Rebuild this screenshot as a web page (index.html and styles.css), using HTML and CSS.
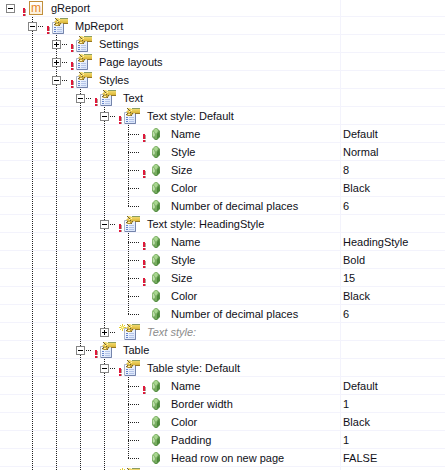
FILE: index.html
```html
<!DOCTYPE html>
<html lang="en">
<head>
    <meta charset="UTF-8">
    <meta name="viewport" content="width=device-width, initial-scale=1.0">
    <title>gReport</title>
    <link rel="stylesheet" href="styles.css">
</head>
<body>
    <svg class="sprite" aria-hidden="true">
        <defs>
            <linearGradient id="gold" x1="0" y1="0" x2="0" y2="1">
                <stop offset="0" stop-color="#f5e27c"/>
                <stop offset="0.5" stop-color="#e2c044"/>
                <stop offset="1" stop-color="#a8862a"/>
            </linearGradient>
            <linearGradient id="green" x1="0" y1="0" x2="1" y2="1">
                <stop offset="0" stop-color="#a5cf8c"/>
                <stop offset="1" stop-color="#3f7a30"/>
            </linearGradient>
            <linearGradient id="paper" x1="0" y1="0" x2="1" y2="1">
                <stop offset="0" stop-color="#ffffff"/>
                <stop offset="1" stop-color="#d5e2fa"/>
            </linearGradient>
        </defs>
        <symbol id="props" viewBox="0 0 16 16">
            <path d="M0.5 4.5h11v11h-11z" fill="url(#paper)" stroke="#a9b3cb"/>
            <path d="M11.500 5v10.500H1" fill="none" stroke="#7484ab"/>
            <path d="M2 9.500h2M2 11.500h2M2 13.500h2" stroke="#6484cc"/>
            <path d="M5 9.500h5M5 11.500h5M5 13.500h5" stroke="#b4c4e8"/>
            <path d="M8 0h8v2H8z" fill="#8a9c62"/>
            <path d="M3 0h3l2 1h8v4l-4 1-2-1-3 3H4L2 7l2-2-2-1 2-2z" fill="url(#gold)"/>
            <path d="M3 0h1v1H3zM4 1h1v1H4zM5 2h1v1H5zM2 6h1v1H2zM3 5h1v1H3zM6 4h1v1H6zM8 5h1v1H8zM7 7h1v1H7z" fill="#6d6038"/>
            <path d="M5 3h1v1H5zM7 2h1v1H7zM4 6h2v1H4z" fill="#fff3b0"/>
            <path d="M11 5h5v1h-5z" fill="#957624"/>
        </symbol>
        <symbol id="gem" viewBox="0 0 8 12">
            <path d="M3 0h2l3 3v6l-3 3H3L0 9V3z" fill="url(#green)"/>
            <path d="M3 1h2l1 2-2 3-2-3z" fill="#a9d890"/>
            <path d="M1 4l1 0 1 3-1 2-1-1z" fill="#bfe0ac"/>
            <path d="M4 6v5" stroke="#86bd6b"/>
            <path d="M5 6l2-2v4l-2 3z" fill="#4c8a39"/>
        </symbol>
        <symbol id="bang" viewBox="0 0 4 8">
            <path d="M2 1h1v4h-1zM2 6h1v2h-1z" fill="#b5a296"/>
            <path d="M0 0h2v5H0zM0 6h2v2H0z" fill="#e0173a"/>
        </symbol>
        <symbol id="star" viewBox="0 0 7 7">
            <path d="M3 0h1v7H3zM0 3h7v1H0zM1 1h1v1H1zM5 1h1v1H5zM1 5h1v1H1zM5 5h1v1H5z" fill="#e3cc2e"/>
            <path d="M2 2h3v3H2z" fill="#f6e567"/>
            <path d="M3 3h1v1H3z" fill="#fffbd8"/>
        </symbol>
    </svg>

    <main class="tree">
        <table>
            <colgroup><col class="col-name"><col></colgroup>
            <tbody>
                <tr><td><div class="node"><i class="root"><button class="toggle" aria-label="Collapse gReport"></button></i><i class="mark"><svg class="bang"><use href="#bang"/></svg></i><i class="icon"><b class="module">m</b></i><span>gReport</span></div></td><td></td></tr>
                <tr><td><div class="node level-1"><i class="line branch"><button class="toggle" aria-label="Collapse MpReport"></button></i><i class="mark"><svg class="bang"><use href="#bang"/></svg></i><i class="icon"><svg class="props"><use href="#props"/></svg></i><span>MpReport</span></div></td><td></td></tr>
                <tr><td><div class="node level-2"><i class="line"></i><i class="line branch"><button class="toggle closed" aria-label="Expand Settings"></button></i><i class="mark"><svg class="bang"><use href="#bang"/></svg></i><i class="icon"><svg class="props"><use href="#props"/></svg></i><span>Settings</span></div></td><td></td></tr>
                <tr><td><div class="node level-2"><i class="line"></i><i class="line branch"><button class="toggle closed" aria-label="Expand Page layouts"></button></i><i class="mark"><svg class="bang"><use href="#bang"/></svg></i><i class="icon"><svg class="props"><use href="#props"/></svg></i><span>Page layouts</span></div></td><td></td></tr>
                <tr><td><div class="node level-2"><i class="line"></i><i class="line branch"><button class="toggle" aria-label="Collapse Styles"></button></i><i class="mark"><svg class="bang"><use href="#bang"/></svg></i><i class="icon"><svg class="props"><use href="#props"/></svg></i><span>Styles</span></div></td><td></td></tr>
                <tr><td><div class="node level-3"><i class="line"></i><i class="line"></i><i class="line branch"><button class="toggle" aria-label="Collapse Text"></button></i><i class="mark"><svg class="bang"><use href="#bang"/></svg></i><i class="icon"><svg class="props"><use href="#props"/></svg></i><span>Text</span></div></td><td></td></tr>

                <!-- Text style: Default -->
                <tr><td><div class="node level-4"><i class="line"></i><i class="line"></i><i class="line"></i><i class="line branch"><button class="toggle" aria-label="Collapse Text style: Default"></button></i><i class="mark"><svg class="bang"><use href="#bang"/></svg></i><i class="icon"><svg class="props"><use href="#props"/></svg></i><span>Text style: Default</span></div></td><td></td></tr>
                <tr><td><div class="node level-5"><i class="line"></i><i class="line"></i><i class="line"></i><i class="line"></i><i class="line branch"></i><i class="mark"><svg class="bang"><use href="#bang"/></svg></i><i class="icon"><svg class="gem"><use href="#gem"/></svg></i><span>Name</span></div></td><td>Default</td></tr>
                <tr><td><div class="node level-5"><i class="line"></i><i class="line"></i><i class="line"></i><i class="line"></i><i class="line branch"></i><i class="mark"></i><i class="icon"><svg class="gem"><use href="#gem"/></svg></i><span>Style</span></div></td><td>Normal</td></tr>
                <tr><td><div class="node level-5"><i class="line"></i><i class="line"></i><i class="line"></i><i class="line"></i><i class="line branch"></i><i class="mark"><svg class="bang"><use href="#bang"/></svg></i><i class="icon"><svg class="gem"><use href="#gem"/></svg></i><span>Size</span></div></td><td>8</td></tr>
                <tr><td><div class="node level-5"><i class="line"></i><i class="line"></i><i class="line"></i><i class="line"></i><i class="line branch"></i><i class="mark"></i><i class="icon"><svg class="gem"><use href="#gem"/></svg></i><span>Color</span></div></td><td>Black</td></tr>
                <tr><td><div class="node level-5"><i class="line"></i><i class="line"></i><i class="line"></i><i class="line"></i><i class="line branch last"></i><i class="mark"></i><i class="icon"><svg class="gem"><use href="#gem"/></svg></i><span>Number of decimal places</span></div></td><td>6</td></tr>

                <!-- Text style: HeadingStyle -->
                <tr><td><div class="node level-4"><i class="line"></i><i class="line"></i><i class="line"></i><i class="line branch"><button class="toggle" aria-label="Collapse Text style: HeadingStyle"></button></i><i class="mark"><svg class="bang"><use href="#bang"/></svg></i><i class="icon"><svg class="props"><use href="#props"/></svg></i><span>Text style: HeadingStyle</span></div></td><td></td></tr>
                <tr><td><div class="node level-5"><i class="line"></i><i class="line"></i><i class="line"></i><i class="line"></i><i class="line branch"></i><i class="mark"><svg class="bang"><use href="#bang"/></svg></i><i class="icon"><svg class="gem"><use href="#gem"/></svg></i><span>Name</span></div></td><td>HeadingStyle</td></tr>
                <tr><td><div class="node level-5"><i class="line"></i><i class="line"></i><i class="line"></i><i class="line"></i><i class="line branch"></i><i class="mark"><svg class="bang"><use href="#bang"/></svg></i><i class="icon"><svg class="gem"><use href="#gem"/></svg></i><span>Style</span></div></td><td>Bold</td></tr>
                <tr><td><div class="node level-5"><i class="line"></i><i class="line"></i><i class="line"></i><i class="line"></i><i class="line branch"></i><i class="mark"><svg class="bang"><use href="#bang"/></svg></i><i class="icon"><svg class="gem"><use href="#gem"/></svg></i><span>Size</span></div></td><td>15</td></tr>
                <tr><td><div class="node level-5"><i class="line"></i><i class="line"></i><i class="line"></i><i class="line"></i><i class="line branch"></i><i class="mark"></i><i class="icon"><svg class="gem"><use href="#gem"/></svg></i><span>Color</span></div></td><td>Black</td></tr>
                <tr><td><div class="node level-5"><i class="line"></i><i class="line"></i><i class="line"></i><i class="line"></i><i class="line branch last"></i><i class="mark"></i><i class="icon"><svg class="gem"><use href="#gem"/></svg></i><span>Number of decimal places</span></div></td><td>6</td></tr>
                <tr><td><div class="node level-4"><i class="line"></i><i class="line"></i><i class="line"></i><i class="line branch last"><button class="toggle closed" aria-label="Expand new text style"></button></i><i class="mark"><svg class="star"><use href="#star"/></svg></i><i class="icon"><svg class="props"><use href="#props"/></svg></i><span class="new">Text style:</span></div></td><td></td></tr>

                <!-- Table -->
                <tr><td><div class="node level-3"><i class="line"></i><i class="line"></i><i class="line branch"><button class="toggle" aria-label="Collapse Table"></button></i><i class="mark"><svg class="bang"><use href="#bang"/></svg></i><i class="icon"><svg class="props"><use href="#props"/></svg></i><span>Table</span></div></td><td></td></tr>
                <tr><td><div class="node level-4"><i class="line"></i><i class="line"></i><i class="line"></i><i class="line branch"><button class="toggle" aria-label="Collapse Table style: Default"></button></i><i class="mark"><svg class="bang"><use href="#bang"/></svg></i><i class="icon"><svg class="props"><use href="#props"/></svg></i><span>Table style: Default</span></div></td><td></td></tr>
                <tr><td><div class="node level-5"><i class="line"></i><i class="line"></i><i class="line"></i><i class="line"></i><i class="line branch"></i><i class="mark"><svg class="bang"><use href="#bang"/></svg></i><i class="icon"><svg class="gem"><use href="#gem"/></svg></i><span>Name</span></div></td><td>Default</td></tr>
                <tr><td><div class="node level-5"><i class="line"></i><i class="line"></i><i class="line"></i><i class="line"></i><i class="line branch"></i><i class="mark"></i><i class="icon"><svg class="gem"><use href="#gem"/></svg></i><span>Border width</span></div></td><td>1</td></tr>
                <tr><td><div class="node level-5"><i class="line"></i><i class="line"></i><i class="line"></i><i class="line"></i><i class="line branch"></i><i class="mark"></i><i class="icon"><svg class="gem"><use href="#gem"/></svg></i><span>Color</span></div></td><td>Black</td></tr>
                <tr><td><div class="node level-5"><i class="line"></i><i class="line"></i><i class="line"></i><i class="line"></i><i class="line branch"></i><i class="mark"></i><i class="icon"><svg class="gem"><use href="#gem"/></svg></i><span>Padding</span></div></td><td>1</td></tr>
                <tr><td><div class="node level-5"><i class="line"></i><i class="line"></i><i class="line"></i><i class="line"></i><i class="line branch last"></i><i class="mark"></i><i class="icon"><svg class="gem"><use href="#gem"/></svg></i><span>Head row on new page</span></div></td><td>FALSE</td></tr>
                <tr><td><div class="node level-4"><i class="line"></i><i class="line"></i><i class="line"></i><i class="line branch last"><button class="toggle closed" aria-label="Expand new table style"></button></i><i class="mark"><svg class="star"><use href="#star"/></svg></i><i class="icon"><svg class="props"><use href="#props"/></svg></i></div></td><td></td></tr>
            </tbody>
        </table>
    </main>
    <script>
        document.querySelectorAll('.toggle').forEach(button => {
            button.addEventListener('click', () => button.classList.toggle('closed'));
        });
    </script>
</body>
</html>
```
FILE: styles.css
```css
* { box-sizing: border-box; margin: 0; padding: 0; }
body { font-family: "Liberation Sans", Arial, sans-serif; font-size: 11px; line-height: 18px; color: #101018; background: #fff; }
.sprite { position: absolute; width: 0; height: 0; }
.tree { height: 100vh; overflow: hidden; }
table { width: 100%; margin-top: -1px; border-collapse: separate; border-spacing: 0; table-layout: fixed; }
.col-name { width: 341px; }
td { height: 18px; padding-left: 2px; white-space: nowrap; box-shadow: inset 0 -1px #f3f3fc; }
td:first-child { padding-left: 0; border-right: 1px solid #f3f3fc; }

.node { display: flex; height: 18px; }
.node i { display: flex; flex: none; height: 18px; font-style: normal; }
.node span { padding-left: 7px; }
.node .new { font-style: italic; color: #8c8c8c; }
.root { width: 20px; padding: 5px 0 0 6px; }
[class*="level-"] { padding-left: 20px; }

/* dotted guides */
.line {
    width: 24px;
    padding: 5px 0 0 8px;
    background: repeating-linear-gradient(#222 0 1px, transparent 1px 2px) 12px 0 / 1px 100% no-repeat;
}
.branch {
    background:
        repeating-linear-gradient(#222 0 1px, transparent 1px 2px) 12px 0 / 1px 100% no-repeat,
        repeating-linear-gradient(90deg, #222 0 1px, transparent 1px 2px) 12px 9px / 12px 1px no-repeat;
}
.last { background-size: 1px 9px, 12px 1px; }

.toggle {
    width: 9px;
    height: 9px;
    border: 1px solid #858585;
    background: linear-gradient(#000, #000) center / 5px 1px no-repeat, #fff;
    cursor: pointer;
}
.toggle.closed { background: linear-gradient(#000, #000) center / 5px 1px no-repeat, linear-gradient(#000, #000) center / 1px 5px no-repeat, #fff; }

.mark { width: 8px; padding-left: 3px; }
.bang { flex: none; width: 4px; height: 8px; margin-top: 9px; }
.star { flex: none; width: 7px; height: 7px; margin-top: 1px; }
.icon { width: 16px; align-items: center; justify-content: center; }
.props { width: 16px; height: 16px; }
.gem { width: 8px; height: 12px; }
.module { width: 14px; height: 14px; border: 1px solid #c18f3c; background: linear-gradient(#fff, #fdf0d8); color: #e8862a; font: 12px/12px "Liberation Sans", Arial, sans-serif; text-align: center; }
```
